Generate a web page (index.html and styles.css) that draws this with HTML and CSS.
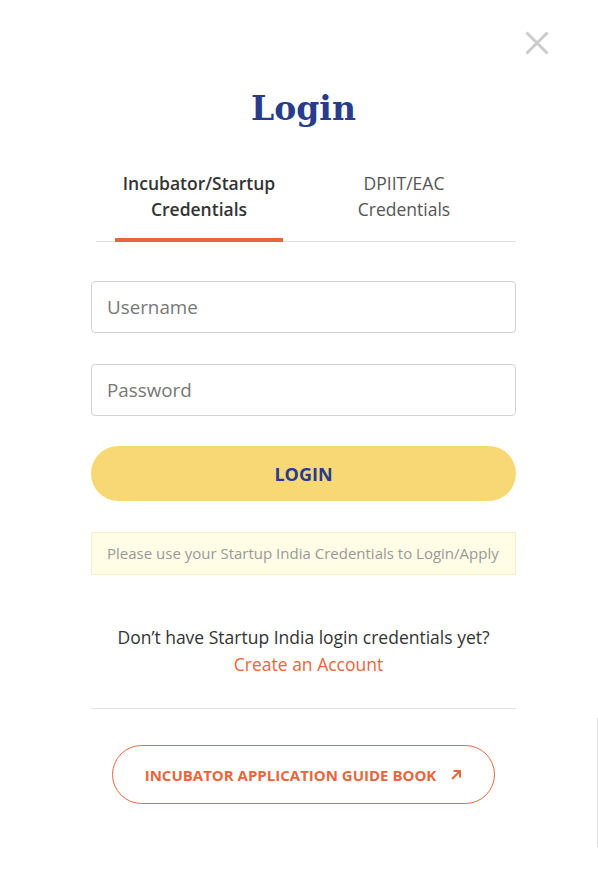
FILE: index.html
```html
<!DOCTYPE html>
<html lang="en">

<head>
  <meta charset="UTF-8">
  <meta name="viewport" content="width=device-width, initial-scale=1.0">
  <title>Login</title>
  <link rel="stylesheet" href="styles.css">
</head>

<body>
  <div class="modal">
    <button class="close-btn" aria-label="Close">
      <svg width="24" height="24" viewBox="0 0 24 24">
        <path d="M1.5 1.5 L22.5 22.5 M22.5 1.5 L1.5 22.5" stroke="#cccccc" stroke-width="3" fill="none" />
      </svg>
    </button>

    <div class="container">
      <h1 class="title">Login</h1>

      <div class="tabs">
        <div class="tab active">Incubator/Startup<br>Credentials</div>
        <div class="tab">DPIIT/EAC<br>Credentials</div>
      </div>

      <form class="login-form">
        <input class="field" type="text" placeholder="Username">
        <input class="field" type="password" placeholder="Password">
        <button class="login-btn" type="button">LOGIN</button>
      </form>

      <div class="notice">Please use your Startup India Credentials to Login/Apply</div>

      <p class="signup">
        Don’t have Startup India login credentials yet?<br>
        <a href="#">Create an Account</a>
      </p>

      <div class="divider"></div>

      <div class="guide">
        <a class="guide-btn" href="#">
          INCUBATOR APPLICATION GUIDE BOOK
          <svg width="12" height="12" viewBox="0 0 12 12">
            <path d="M2 10 L10 2 M3.5 2 H10 V8.5" stroke="#e8663d" stroke-width="2" fill="none" />
          </svg>
        </a>
      </div>
    </div>

    <div class="scroll-line"></div>
  </div>
</body>

</html>
```

FILE: styles.css
```css
body {
  margin: 0;
  font-family: "Open Sans", Arial, sans-serif;
  background-color: #fff;
  color: #333;
}

.modal {
  position: relative;
  width: 598px;
  height: 878px;
  padding-top: 85px;
  box-sizing: border-box;
}

.close-btn {
  position: absolute;
  top: 31px;
  right: 49px;
  width: 24px;
  height: 24px;
  padding: 0;
  border: none;
  background: none;
  cursor: pointer;
}

.close-btn svg {
  display: block;
}

.container {
  width: 425px;
  margin-left: 91px;
}

.title {
  margin: 0;
  text-align: center;
  font-family: "DejaVu Serif", "Liberation Serif", serif;
  font-size: 33px;
  font-weight: bold;
  line-height: 48px;
  color: #283c8b;
}

.tabs {
  display: flex;
  gap: 37px;
  margin: 35px 0 0 5px;
  padding-left: 19px;
  border-bottom: 1px solid #e2e2e2;
}

.tab {
  width: 168px;
  padding: 2px 0 16px;
  text-align: center;
  font-size: 17.5px;
  line-height: 26px;
  color: #555;
  border-bottom: 4px solid transparent;
  margin-bottom: -1px;
}

.tab.active {
  color: #333;
  font-weight: 600;
  border-bottom-color: #e8663d;
}

.login-form {
  display: flex;
  flex-direction: column;
  margin-top: 39px;
}

.field {
  height: 52px;
  box-sizing: border-box;
  margin-bottom: 31px;
  padding: 0 15px;
  border: 1px solid #d2d2d8;
  border-radius: 4px;
  font-family: "Open Sans", Arial, sans-serif;
  font-size: 18.8px;
  color: #333;
}

.field::placeholder {
  color: #777;
}

.login-btn {
  height: 55px;
  margin-top: -1px;
  border: none;
  border-radius: 28px;
  background-color: #f8d775;
  font-family: "Open Sans", Arial, sans-serif;
  font-size: 18px;
  font-weight: bold;
  color: #283c8b;
  cursor: pointer;
}

.notice {
  margin-top: 31px;
  padding: 10px 15px;
  background-color: #fffde6;
  border: 1px solid #f4efc9;
  font-size: 15px;
  line-height: 21px;
  white-space: nowrap;
  color: #999;
}

.signup {
  margin: 49px 0 0;
  text-align: center;
  font-size: 17.5px;
  line-height: 27px;
  color: #333;
}

.signup a {
  margin-left: 10px;
  color: #e8663d;
  text-decoration: none;
}

.divider {
  margin-top: 30px;
  border-top: 1px solid #e2e2e2;
}

.guide {
  display: flex;
  justify-content: center;
  margin-top: 36px;
}

.guide-btn {
  display: flex;
  align-items: center;
  gap: 14px;
  height: 59px;
  box-sizing: border-box;
  padding: 0 32px;
  border: 1px solid #e8663d;
  border-radius: 30px;
  font-size: 15px;
  font-weight: bold;
  color: #e8663d;
  text-decoration: none;
}

.scroll-line {
  position: absolute;
  left: 597px;
  top: 718px;
  width: 1px;
  height: 129px;
  background-color: #e0e0e0;
}
```
